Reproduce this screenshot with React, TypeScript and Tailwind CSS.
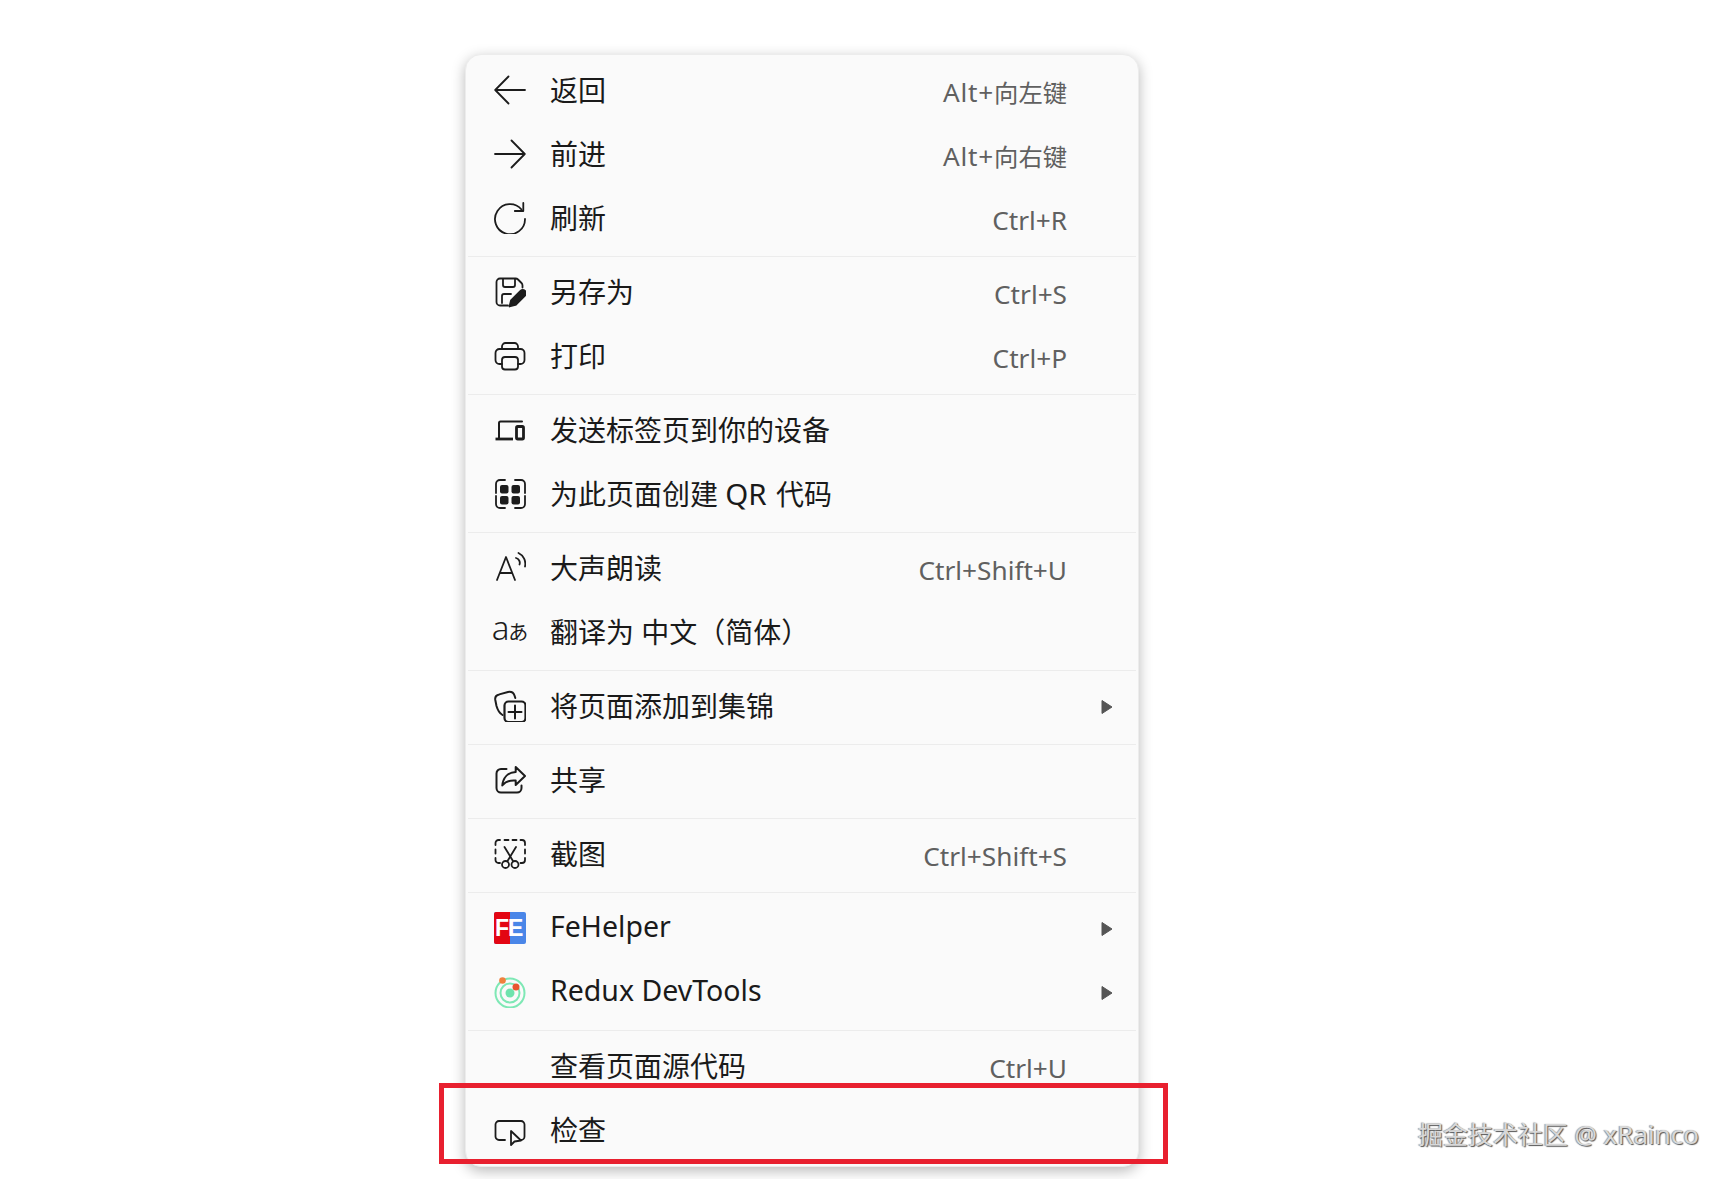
import React from "react";

const cjk = '"Noto Sans", "Noto Sans CJK SC", sans-serif';

function Ic({ children }: { children?: React.ReactNode }) {
  return (
    <svg width="32" height="32" viewBox="0 0 32 32" fill="none" stroke="#1c1c1c" strokeWidth="1.8" strokeLinecap="round" strokeLinejoin="round" className="shrink-0">
      {children}
    </svg>
  );
}

const sq = "#1c1c1c";

const icons: Record<string, React.ReactNode> = {
  back: <Ic><path d="M31 16H1.500M14.500 2.500 1.200 16l13.300 13.500" /></Ic>,
  forward: <Ic><path d="M1 16h29.500M17.500 2.500 30.800 16 17.500 29.500" /></Ic>,
  refresh: <Ic><path d="M27.500 7.500A15 15 0 1 0 31 17" /><path d="M29.300 1v8h-8.500" /></Ic>,
  save: (
    <Ic>
      <path d="M14 29.500H6a3.500 3.500 0 0 1-3.500-3.500V6A3.500 3.500 0 0 1 6 2.500h15.500a3.500 3.500 0 0 1 2.500 1l3.500 3.500a3.500 3.500 0 0 1 1 2.500v2" />
      <path d="M9 3v6a2 2 0 0 0 2 2h8a2 2 0 0 0 2-2V3M8 27v-7a2 2 0 0 1 2-2h7" />
      <path d="M15.500 30.500l1.500-6L26.500 15a3 3 0 0 1 4.500 4.500l-9.500 9.500z" fill="#1c1c1c" />
    </Ic>
  ),
  print: (
    <Ic>
      <path d="M8 9V6.500A3.500 3.500 0 0 1 11.500 3h9A3.500 3.500 0 0 1 24 6.500V9" />
      <path d="M8 24H5.500A4 4 0 0 1 1.500 20v-7a4 4 0 0 1 4-4h21a4 4 0 0 1 4 4v7a4 4 0 0 1-4 4H24" />
      <rect x="8" y="17" width="16" height="12.500" rx="3" />
    </Ic>
  ),
  device: (
    <Ic>
      <path d="M5 24V9a1.500 1.500 0 0 1 1.500-1.500H28" strokeWidth="2" />
      <path d="M1.500 25H19" strokeWidth="2.800" strokeLinecap="butt" />
      <rect x="22.500" y="12.500" width="7" height="12.500" rx="1.200" strokeWidth="2.800" />
    </Ic>
  ),
  qr: (
    <Ic>
      <path d="M2 15V6a4 4 0 0 1 4-4h5M21 2h6a4 4 0 0 1 4 4v9M2 18v8a4 4 0 0 0 4 4h5M21 30h6a4 4 0 0 0 4-4v-8" />
      <rect x="6" y="7" width="8.500" height="8.500" rx="2" fill={sq} stroke="none" />
      <rect x="17.500" y="7" width="8.500" height="8.500" rx="2" fill={sq} stroke="none" />
      <rect x="6" y="18" width="8.500" height="8.500" rx="2" fill={sq} stroke="none" />
      <rect x="17.500" y="18" width="8.500" height="8.500" rx="2" fill={sq} stroke="none" />
    </Ic>
  ),
  read: (
    <Ic>
      <path d="M3 28 12 5l9 23M6 21h12" strokeWidth="1.800" />
      <path d="M22 6a5 5 0 0 1 3.500 6.500M24.500 1a12 12 0 0 1 6.500 13.500" strokeWidth="1.800" />
    </Ic>
  ),
  translate: (
    <span className="flex items-baseline text-[#1c1c1c] leading-[32px] whitespace-nowrap -mt-[3px]">
      <span className="text-[33px] font-light tracking-[-1px]">a</span>
      <span className="text-[20px] font-normal">あ</span>
    </span>
  ),
  collection: (
    <Ic>
      <path d="M8.500 25C5 23 3.500 19.500 2.500 16L1.300 10c-.5-3 1-5 4-5.600L14 2c3-.5 5.500.5 6.500 3.500l.8 2.500" strokeWidth="2" />
      <rect x="10.500" y="11.500" width="21" height="20.500" rx="4" strokeWidth="2.200" />
      <path d="M21 15.500v13M14.500 22h13" strokeWidth="2" />
    </Ic>
  ),
  share: (
    <Ic>
      <path d="M12.500 5H7a4.500 4.500 0 0 0-4.500 4.500V24A4.500 4.500 0 0 0 7 28.500h16a4.500 4.500 0 0 0 4.500-4.500v-2.500" strokeWidth="2" />
      <path d="M21.700 3 31 12l-9.300 9v-4.500C16 16 11.500 17.500 8.300 21.500 9 14 13.500 8.500 21.700 8z" strokeWidth="2" />
    </Ic>
  ),
  screenshot: (
    <Ic>
      <path d="M1.500 7V5a3 3 0 0 1 3-3H6M10.500 2h4M18.500 2h4M26.500 2H28a3 3 0 0 1 3 3v2M31 11.500v4M31 20v2a3 3 0 0 1-3 3h-1.500M1.500 11.500v4M1.500 20v2a3 3 0 0 0 3 3H6" />
      <path d="M10.500 9 19 23M22 9 13.500 23" />
      <circle cx="11.500" cy="26.500" r="3.500" />
      <circle cx="21" cy="26.500" r="3.500" />
    </Ic>
  ),
  fe: (
    <div className="relative w-8 h-8 shrink-0 rounded-[2px] overflow-hidden flex bg-[#4a86e8]">
      <div className="w-[16px] h-full bg-[#e30613]" />
      <span className="absolute left-[1px] top-[4px] text-white text-[23px] leading-[24px] font-bold tracking-[-1px]" style={{ fontFamily: '"Liberation Sans", sans-serif' }}>FE</span>
    </div>
  ),
  redux: (
    <svg width="32" height="32" viewBox="0 0 32 32" fill="none" className="shrink-0">
      <circle cx="16" cy="17" r="14.500" stroke="#7ee8b5" strokeWidth="2" />
      <circle cx="16" cy="17" r="9.500" stroke="#7ee8b5" strokeWidth="2" />
      <circle cx="16" cy="17" r="4.500" fill="#6fe3ad" />
      <circle cx="8.500" cy="4.500" r="3.300" fill="#f0813e" />
      <circle cx="22" cy="11" r="3.500" fill="#e8552f" />
    </svg>
  ),
  inspect: (
    <Ic>
      <path d="M11 26H5a3.500 3.500 0 0 1-3.500-3.500v-12A3.500 3.500 0 0 1 5 7h22a3.500 3.500 0 0 1 3.500 3.500v12A3.500 3.500 0 0 1 27 26h-1" />
      <path d="M17 17v14l3.500-3.500 6.500-1z" fill="#fafafa" />
    </Ic>
  ),
};

const L = ({ children }: { children: React.ReactNode }) => <span className="text-[28.500px] pb-[3px] inline-block">{children}</span>;
const K = ({ children }: { children: React.ReactNode }) => <span className="text-[26.200px]">{children}</span>;
const A = () => <span className="text-[26.200px] tracking-[0.8px]">Alt+</span>;

function Row({ icon, label, keys, sub }: { icon?: string; label: React.ReactNode; keys?: React.ReactNode; sub?: boolean }) {
  return (
    <div className={`flex items-center h-16 pl-[28px] ${sub ? "pr-[25px]" : "pr-[71px]"}`}>
      <div className="w-8 h-8 shrink-0 mr-6 flex items-center justify-center">{icon ? icons[icon] : null}</div>
      <span className="text-[28px] text-[#1a1a1a] font-normal whitespace-nowrap">{label}</span>
      {keys && <span className="ml-auto pt-[6px] text-[24.300px] text-[#606060] font-normal whitespace-nowrap">{keys}</span>}
      {sub && (
        <svg width="12" height="16" viewBox="0 0 12 16" className="ml-auto mt-[2px]"><path d="M1 1.500 11 8 1 14.500z" fill="#555555" stroke="#555555" strokeWidth="1" strokeLinejoin="round" /></svg>
      )}
    </div>
  );
}

const Sep = () => <div className="h-px bg-[#ececec] mt-[6px] mb-[3px] mx-[2px]" />;

export default function App() {
  return (
    <div className="relative w-[1728px] h-[1179px] bg-white overflow-hidden pt-[54px] pl-[465px]" style={{ fontFamily: cjk }}>
      <div className="w-[674px] h-[1113px] pt-[3px] bg-[#fafafa] rounded-2xl border border-[#ececec] overflow-hidden shadow-[0_4px_14px_rgba(0,0,0,0.28)]">
        <Row icon="back" label="返回" keys={<><A />向左键</>} />
        <Row icon="forward" label="前进" keys={<><A />向右键</>} />
        <Row icon="refresh" label="刷新" keys={<K>Ctrl+R</K>} />
        <Sep />
        <Row icon="save" label="另存为" keys={<K>Ctrl+S</K>} />
        <Row icon="print" label="打印" keys={<K>Ctrl+P</K>} />
        <Sep />
        <Row icon="device" label="发送标签页到你的设备" />
        <Row icon="qr" label={<>为此页面创建 <span className="text-[29.500px] mr-[2px]">QR</span> 代码</>} />
        <Sep />
        <Row icon="read" label="大声朗读" keys={<K>Ctrl+Shift+U</K>} />
        <Row icon="translate" label="翻译为 中文（简体）" />
        <Sep />
        <Row icon="collection" label="将页面添加到集锦" sub />
        <Sep />
        <Row icon="share" label="共享" />
        <Sep />
        <Row icon="screenshot" label="截图" keys={<K>Ctrl+Shift+S</K>} />
        <Sep />
        <Row icon="fe" label={<L>FeHelper</L>} sub />
        <Row icon="redux" label={<L>Redux DevTools</L>} sub />
        <Sep />
        <Row label="查看页面源代码" keys={<K>Ctrl+U</K>} />
        <Row icon="inspect" label="检查" />
      </div>
      <div className="absolute left-[439px] top-[1083px] w-[729px] h-[81px] border-[5px] border-[#e8202f]" />
      <span className="absolute left-[1418px] top-[1117px] text-[25px] leading-[34px] text-[#d8d8d8] whitespace-nowrap [text-shadow:1px_1px_1px_#555555,-1px_0_1px_#999999]">掘金技术社区 @ <span className="text-[26px]">xRainco</span></span>
    </div>
  );
}
